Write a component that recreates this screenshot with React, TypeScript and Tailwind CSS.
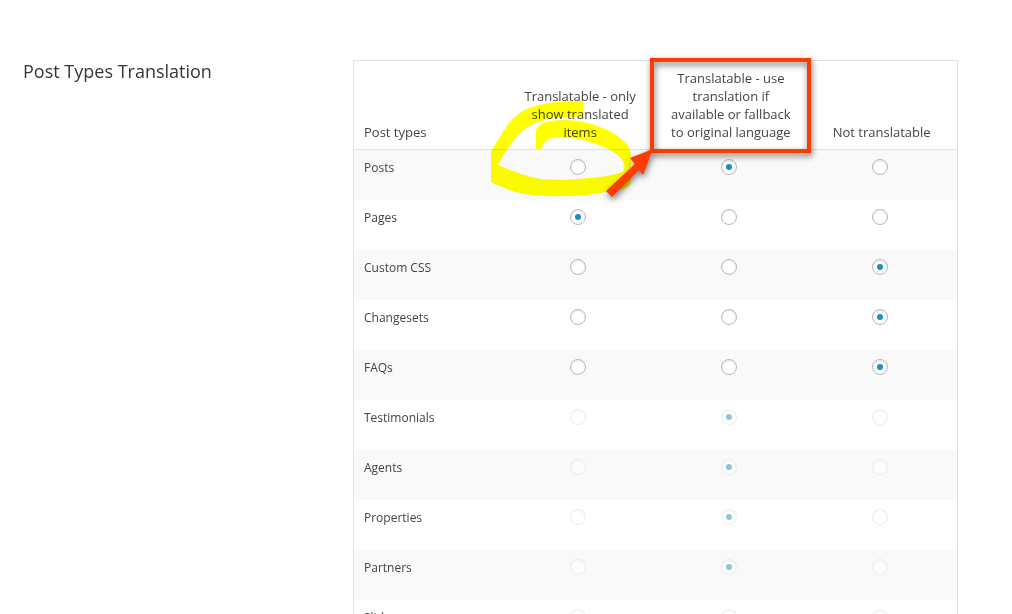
type PostType = {
  slug: string;
  label: string;
  mode: number;
  locked?: boolean;
};

const POST_TYPES: PostType[] = [
  { slug: 'post', label: 'Posts', mode: 1 },
  { slug: 'page', label: 'Pages', mode: 0 },
  { slug: 'custom_css', label: 'Custom CSS', mode: 2 },
  { slug: 'changeset', label: 'Changesets', mode: 2 },
  { slug: 'faq', label: 'FAQs', mode: 2 },
  { slug: 'testimonial', label: 'Testimonials', mode: 1, locked: true },
  { slug: 'agent', label: 'Agents', mode: 1, locked: true },
  { slug: 'property', label: 'Properties', mode: 1, locked: true },
  { slug: 'partner', label: 'Partners', mode: 1, locked: true },
  { slug: 'slide', label: 'Slides', mode: 1, locked: true },
];

const MODES = [
  'Translatable - only show translated items',
  'Translatable - use translation if available or fallback to original language',
  'Not translatable',
];

function ModeRadio({ row, mode }: { row: PostType; mode: number }) {
  return (
    <input
      type="radio"
      name={row.slug}
      aria-label={`${row.label}: ${MODES[mode]}`}
      defaultChecked={row.mode === mode}
      disabled={row.locked}
      className="mr-1 grid size-4 shrink-0 appearance-none place-content-center rounded-full border border-[#b4b9be] bg-white shadow-[inset_0_1px_2px_rgba(0,0,0,0.1)] before:size-1.5 before:rounded-full checked:before:bg-[#1e8cbe] disabled:border-[#dedede]/50 disabled:bg-white/50 disabled:shadow-[inset_0_1px_2px_rgba(0,0,0,0.04)] disabled:checked:before:opacity-50"
    />
  );
}

export default function App() {
  return (
    <main className="flex h-screen items-start overflow-hidden bg-white pt-[60px] pr-[54px] pl-[23px] font-['Open_Sans',sans-serif] text-[13px] leading-[18px] text-[#444]">
      <h2 className="w-[330px] shrink-0 text-[18px] leading-[22px] text-[#32373c]">Post Types Translation</h2>

      <div className="relative flex-1">
        <table className="w-full table-fixed border-separate border-spacing-0 border border-[#e1e1e1]">
          <thead>
            <tr className="align-bottom">
              <th scope="col" className="border-b border-[#e1e1e1] px-2.5 py-2 text-left font-normal">
                Post types
              </th>
              {MODES.map((mode) => (
                <th key={mode} scope="col" className="border-b border-[#e1e1e1] px-2.5 py-2 text-center font-normal">
                  {mode}
                </th>
              ))}
            </tr>
          </thead>
          <tbody className="text-[12px] leading-5">
            {POST_TYPES.map((row) => (
              <tr key={row.slug} className="h-[50px] align-top odd:bg-[#f9f9f9]">
                <th scope="row" className="px-2.5 py-2 text-left font-normal">
                  {row.label}
                </th>
                {MODES.map((mode, i) => (
                  <td key={mode} className="px-2.5 py-2">
                    <div className="flex h-[18px] items-center justify-center">
                      <ModeRadio row={row} mode={i} />
                    </div>
                  </td>
                ))}
              </tr>
            ))}
          </tbody>
        </table>

        {/* Highlighter loop around the first option */}
        <svg
          className="pointer-events-none absolute top-10 left-[138px] mix-blend-multiply"
          width="141"
          height="97"
          viewBox="491 100 141 97"
          fill="#ff0"
          aria-hidden="true"
        >
          <path d="M583 101L556 102Q538 104 527 109Q516 114 508 124L491 151V182Q507 190 520 193Q540 197 565 196Q585 196 600 193L623 189Q631 187 631 180V155Q630 145 620 138Q612 131 600 127Q583 120 565 120Q554 120 546 122Q537 125 536 131V149H541Q544 140 552 138Q570 136 590 142Q612 149 620 157Q627 166 623 172Q606 177 590 178Q560 181 540 179Q520 175 498 165Q505 151 517 136Q528 124 545 120Q560 116 583 117Z" />
        </svg>

        {/* Callout frame and its arrow */}
        <div className="pointer-events-none absolute -top-0.5 left-[297px] h-[95px] w-[161px] border-4 border-[#fd3c00] drop-shadow-[1px_3px_3px_rgba(0,0,0,0.55)]" />
        <svg
          className="pointer-events-none absolute top-[85px] left-[247px] overflow-visible drop-shadow-[1px_3px_3px_rgba(0,0,0,0.5)]"
          width="60"
          height="55"
          viewBox="600 145 60 55"
          fill="#fd3c00"
          aria-hidden="true"
        >
          <path d="M653 149L643 175L639 170L612 197L606 191L635 164L630 158Z" />
        </svg>
      </div>
    </main>
  );
}
